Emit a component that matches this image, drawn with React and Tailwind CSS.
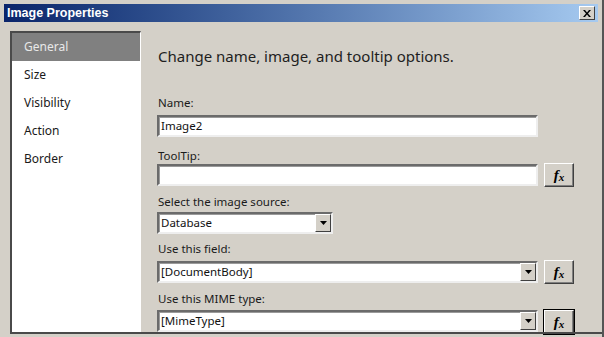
import React from 'react';

const items = ['General', 'Size', 'Visibility', 'Action', 'Border'];

function Fx({ focused }) {
  return (
    <button
      className={`w-[30px] h-[24px] shrink-0 flex items-center justify-center bg-[#d4d0c8] border border-t-white border-l-white border-b-[#404040] border-r-[#404040] shadow-[inset_-1px_-1px_0_#808080] ${focused ? 'outline outline-1 outline-black' : ''}`}
    >
      <span className="font-['Liberation_Serif',serif] italic font-bold text-[15px] leading-none text-black">
        f<span className="text-[11px] relative top-[1px]">x</span>
      </span>
    </button>
  );
}

function Field({ value, width = 'w-[381px]', dropdown }) {
  return (
    <div
      className={`${width} h-[22px] shrink-0 flex items-center bg-white border-2 border-t-[#6b6b6b] border-l-[#6b6b6b] border-b-[#eeeeee] border-r-[#eeeeee] shadow-[inset_1px_1px_0_#9a9a9a]`}
    >
      <span className="flex-1 pl-[2px] text-[11.5px] text-[#111]">{value}</span>
      {dropdown && (
        <div className="w-[16px] h-[18px] flex items-center justify-center bg-[#d4d0c8] border border-t-white border-l-white border-b-[#404040] border-r-[#404040]">
          <svg width="7" height="4" viewBox="0 0 7 4">
            <path d="M0 0h7L3.5 4z" fill="#000" />
          </svg>
        </div>
      )}
    </div>
  );
}

function Label({ children, className = '' }) {
  return <div className={`pl-[1px] h-[16px] leading-[16px] text-[11.5px] text-[#1a1a1a] ${className}`}>{children}</div>;
}

export default function App() {
  return (
    <div className="w-[604px] h-[337px] bg-[#d4d0c8] relative overflow-hidden font-['Noto_Sans',sans-serif] border-r-2 border-r-[#555]">
      {/* Title bar */}
      <div className="mx-[4px] mt-[4px] h-[18px] flex items-center justify-between pl-[3px] pr-[3px] bg-gradient-to-r from-[#0a246a] to-[#a6caf0]">
        <span className="font-['Liberation_Sans',sans-serif] font-bold text-[12.5px] text-white">Image Properties</span>
        <div className="w-[16px] h-[14px] flex items-center justify-center bg-[#d4d0c8] border border-t-white border-l-white border-b-[#404040] border-r-[#404040]">
          <svg width="8" height="7" viewBox="0 0 8 7">
            <path d="M0 0h2l2 2.5L6 0h2L5 3.5 8 7H6L4 4.5 2 7H0l3-3.5z" fill="#000" />
          </svg>
        </div>
      </div>

      <div className="flex mt-[9px] h-[302px]">
        {/* Left list */}
        <div className="ml-[10px] w-[131px] h-full bg-white border-t-2 border-l-2 border-t-[#4a4a4a] border-l-[#4a4a4a] border-r border-r-white">
          {items.map((it, i) => (
            <div
              key={it}
              className={`h-[28px] flex items-center pl-[12px] text-[12px] ${i === 0 ? 'bg-[#808080] text-[#e8e8e8]' : 'text-[#1a1a1a]'}`}
            >
              {it}
            </div>
          ))}
        </div>

        {/* Content */}
        <div className="flex-1 pl-[16px]">
          <div className="mt-[15px] pl-[1px] h-[20px] leading-[20px] text-[15px] text-[#1e1e1e]">
            Change name, image, and tooltip options.
          </div>

          <Label className="mt-[29px]">Name:</Label>
          <div className="mt-[4px]">
            <Field value="Image2" />
          </div>

          <Label className="mt-[11px]">ToolTip:</Label>
          <div className="flex items-center gap-[6px] h-[24px] -mt-[1px]">
            <Field value="" />
            <Fx />
          </div>

          <Label className="mt-[7px]">Select the image source:</Label>
          <div className="mt-[2px]">
            <Field value="Database" width="w-[176px]" dropdown />
          </div>

          <Label className="mt-[7px]">Use this field:</Label>
          <div className="flex items-center gap-[6px] h-[24px] mt-[3px]">
            <Field value="[DocumentBody]" dropdown />
            <Fx />
          </div>

          <Label className="mt-[7px]">Use this MIME type:</Label>
          <div className="flex items-start gap-[6px] h-[24px] mt-[3px]">
            <Field value="[MimeType]" dropdown />
            <Fx focused />
          </div>
        </div>
      </div>

      {/* bottom edge */}
      <div className="absolute left-[10px] right-0 top-[332px] h-[2px] bg-[#4a4a4a]" />
    </div>
  );
}
